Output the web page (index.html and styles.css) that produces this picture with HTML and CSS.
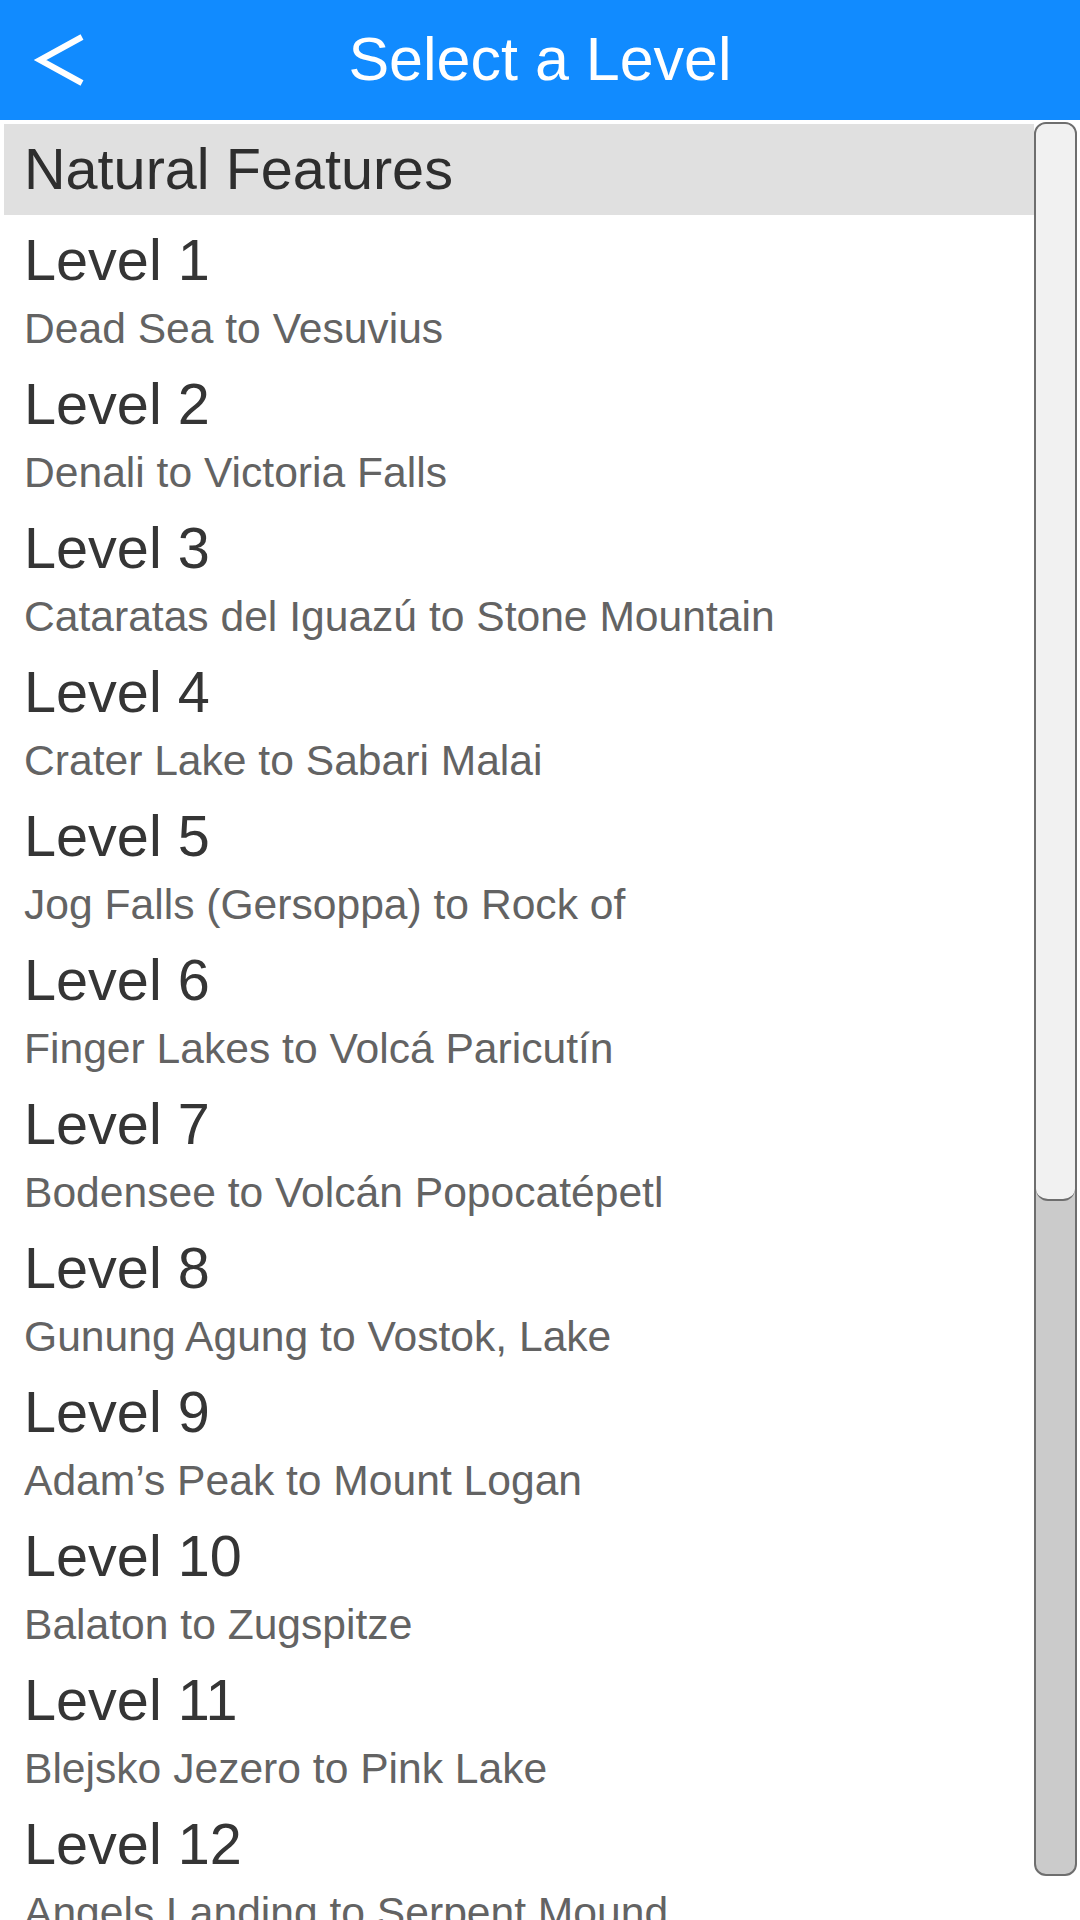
FILE: index.html
```html
<!DOCTYPE html>
<html>
<head>
<meta charset="utf-8">
<link rel="stylesheet" href="styles.css">
</head>
<body>
<header class="topbar">
  <svg class="back" width="56" height="52" viewBox="0 0 56 52">
    <polyline points="50,3 8,26 50,49" fill="none" stroke="#ffffff" stroke-width="6" stroke-linejoin="miter"/>
  </svg>
  <h1 class="title">Select a Level</h1>
</header>
<main class="content">
  <section class="list">
    <div class="section-head">Natural Features</div>
    <div class="rows">
      <div class="row"><div class="lvl">Level 1</div><div class="sub">Dead Sea to Vesuvius</div></div>
      <div class="row"><div class="lvl">Level 2</div><div class="sub">Denali to Victoria Falls</div></div>
      <div class="row"><div class="lvl">Level 3</div><div class="sub">Cataratas del Iguazú to Stone Mountain</div></div>
      <div class="row"><div class="lvl">Level 4</div><div class="sub">Crater Lake to Sabari Malai</div></div>
      <div class="row"><div class="lvl">Level 5</div><div class="sub">Jog Falls (Gersoppa) to Rock of</div></div>
      <div class="row"><div class="lvl">Level 6</div><div class="sub">Finger Lakes to Volcá Paricutín</div></div>
      <div class="row"><div class="lvl">Level 7</div><div class="sub">Bodensee to Volcán Popocatépetl</div></div>
      <div class="row"><div class="lvl">Level 8</div><div class="sub">Gunung Agung to Vostok, Lake</div></div>
      <div class="row"><div class="lvl">Level 9</div><div class="sub">Adam’s Peak to Mount Logan</div></div>
      <div class="row"><div class="lvl">Level 10</div><div class="sub">Balaton to Zugspitze</div></div>
      <div class="row"><div class="lvl">Level 11</div><div class="sub">Blejsko Jezero to Pink Lake</div></div>
      <div class="row"><div class="lvl">Level 12</div><div class="sub">Angels Landing to Serpent Mound</div></div>
    </div>
  </section>
  <div class="scrollbar">
    <div class="thumb"></div>
  </div>
</main>
</body>
</html>
```

FILE: styles.css
```css
html, body {
  margin: 0;
  padding: 0;
  width: 1080px;
  height: 1920px;
  overflow: hidden;
  background: #ffffff;
  font-family: "Liberation Sans", Arial, sans-serif;
}

.topbar {
  position: relative;
  height: 120px;
  background: #118bff;
  display: flex;
  align-items: center;
  justify-content: center;
}

.back {
  position: absolute;
  left: 32px;
  top: 34px;
}

.title {
  margin: 0;
  font-weight: normal;
  font-size: 61px;
  color: #ffffff;
  line-height: 120px;
  margin-top: -2px;
}

.content {
  display: flex;
  padding-top: 2px;
  height: 1798px;
}

.list {
  flex: 1;
  margin-left: 4px;
  padding-top: 2px;
  overflow: hidden;
}

.section-head {
  height: 91px;
  line-height: 91px;
  background: #e0e0e0;
  color: #2e2e2e;
  font-size: 57.6px;
  padding-left: 20px;
}

.rows {
  padding-top: 5px;
}

.row {
  padding: 4px 0 4px 20px;
}

.lvl {
  font-size: 57.6px;
  line-height: 72px;
  color: #353535;
}

.sub {
  font-size: 42.6px;
  line-height: 64px;
  color: #636363;
  white-space: nowrap;
}

.scrollbar {
  width: 39px;
  height: 1750px;
  margin-right: 3px;
  border: 2px solid #6e6e6e;
  border-radius: 12px;
  background: #cbcbcb;
  overflow: hidden;
}

.thumb {
  height: 1075px;
  background: #f1f1f1;
  border-bottom: 2px solid #6e6e6e;
  border-radius: 0 0 12px 12px;
}
```
